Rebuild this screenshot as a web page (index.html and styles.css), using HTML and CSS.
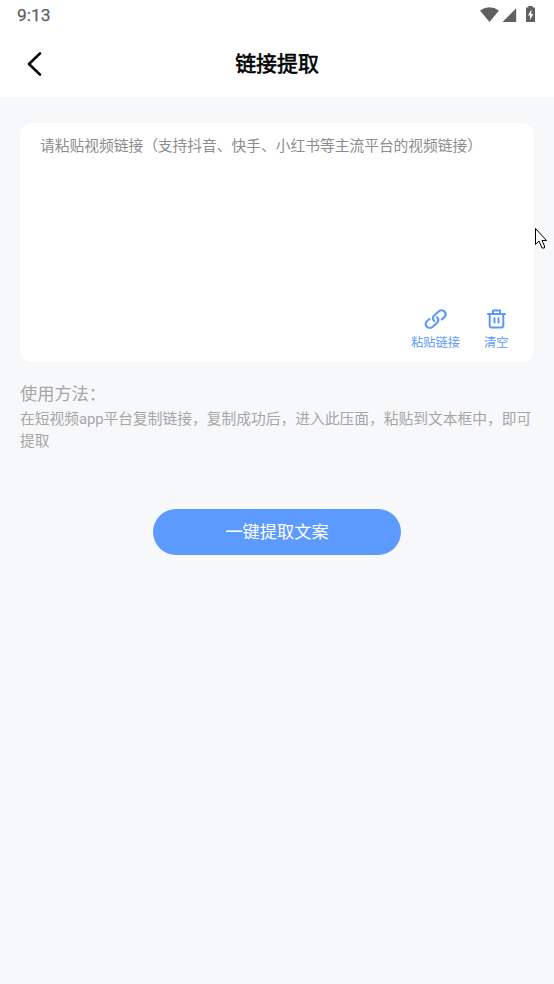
FILE: index.html
```html
<!DOCTYPE html>
<html lang="zh-CN">
<head>
<meta charset="utf-8">
<title>链接提取</title>
<link rel="stylesheet" href="styles.css">
</head>
<body>
<header class="top">
  <div class="status">
    <span class="clock">9:13</span>
    <svg class="status-icons" width="58" height="18" viewBox="0 0 58 18" fill="#606060">
      <path d="M1 5.600Q10.500-1.200 20 5.600L10.500 17Z"/>
      <path d="M23.500 17H37.200V3.200Z"/>
      <path fill-rule="evenodd" d="M49.300 1H53.700V2.500H56V17H47V2.500H49.300ZM52.300 4.500L49 10.500H51V15L54.300 8.900H52.300Z"/>
    </svg>
  </div>
  <div class="nav">
    <svg class="back" width="16" height="26" viewBox="0 0 16 26"><path d="M13 2.400L2 13L13 23.600" fill="none" stroke="#000" stroke-width="2.700" stroke-linecap="round" stroke-linejoin="round"/></svg>
    <h1 class="title">链接提取</h1>
  </div>
</header>
<main class="content">
  <section class="card">
    <p class="placeholder">请粘贴视频链接（支持抖音、快手、小红书等主流平台的视频链接）</p>
    <div class="actions">
      <div class="action">
        <svg width="24" height="24" viewBox="0 0 24 24" fill="none" stroke="#5b9afc" stroke-width="2.200" stroke-linecap="round" stroke-linejoin="round">
          <path d="M10.200 13.900C8.400 12.300 8.600 9.900 10.200 8.500L14.300 4.800C16.200 3 18.900 3 20.500 4.600S22 8.600 20.200 10.300L17.800 12.300"/>
          <path d="M13.100 10.300C14.900 11.900 14.700 14.300 13.100 15.700L9 19.500C7.100 21.300 4.400 21.300 2.800 19.700S1.300 15.700 3.100 14L5.500 12"/>
        </svg>
        <span>粘贴链接</span>
      </div>
      <div class="action">
        <svg width="24" height="24" viewBox="0 0 24 24" fill="none" stroke="#5b9afc" stroke-width="2" stroke-linecap="round" stroke-linejoin="round">
          <path d="M4 7H21M9 6.800V3.400H16V6.800M5.700 7.500V18.600Q5.700 20.400 7.500 20.400H17.500Q19.300 20.400 19.300 18.600V7.500M10.500 11.200V15.500M14.500 11.200V15.500"/>
        </svg>
        <span>清空</span>
      </div>
    </div>
  </section>
  <h2 class="help-title">使用方法：</h2>
  <p class="help">在短视频app平台复制链接，复制成功后，进入此压面，粘贴到文本框中，即可提取</p>
  <button class="submit">一键提取文案</button>
</main>
<svg class="cursor" width="14" height="23" viewBox="0 0 14 23"><path d="M1.500 1.500V17.500L5 14L8 21H10.500V19L8 13.500H12.500Z" fill="#fff" stroke="#000" stroke-width="1"/></svg>
</body>
</html>
```

FILE: styles.css
```css
* { box-sizing: border-box; }
body {
  margin: 0;
  min-height: 984px;
  background: #f7f8fa;
  font-family: Roboto, "Noto Sans CJK SC", sans-serif;
}
h1, h2, p { margin: 0; font-weight: 400; }
.top { height: 97px; background: #fff; }
.status {
  height: 31px;
  padding: 0 17px;
  display: flex;
  justify-content: space-between;
  align-items: center;
}
.clock { font-size: 17.400px; color: #606060; line-height: 31px; -webkit-text-stroke: 0.250px #606060; }
.status-icons { margin: -3px 0 0; }
.nav {
  height: 66px;
  padding: 0 27px;
  display: grid;
  grid-template-columns: 16px 1fr 16px;
  align-items: center;
}
.title { font-size: 20.900px; font-weight: 400; line-height: 30px; text-align: center; color: #000; -webkit-text-stroke: 0.600px #000; }
.content { padding: 26px 20px 0; display: flex; flex-direction: column; }
.card {
  height: 239px;
  padding: 12px 20px 10px;
  border-radius: 12px;
  background: #fff;
  display: flex;
  flex-direction: column;
  justify-content: space-between;
}
.placeholder { font-size: 14.740px; line-height: 22px; color: #8c8c8c; white-space: nowrap; }
.actions { display: flex; justify-content: flex-end; gap: 24px; padding-right: 5.500px; }
.action { display: flex; flex-direction: column; align-items: center; gap: 3px; font-size: 12.250px; line-height: 18px; color: #5b9afc; }
.help-title { margin-top: 19px; font-size: 17.220px; line-height: 27px; color: #a6a6a6; }
.help { width: 516px; font-size: 14.760px; line-height: 22px; color: #a6a6a6; }
.submit {
  align-self: center;
  width: 248px;
  height: 46px;
  margin-top: 57px;
  padding: 0 0 3px;
  border: 0;
  border-radius: 23px;
  background: #5c9aff;
  color: #fff;
  font: 17.220px "Noto Sans CJK SC", sans-serif;
}
.cursor { position: absolute; left: 534px; top: 227px; }
```
